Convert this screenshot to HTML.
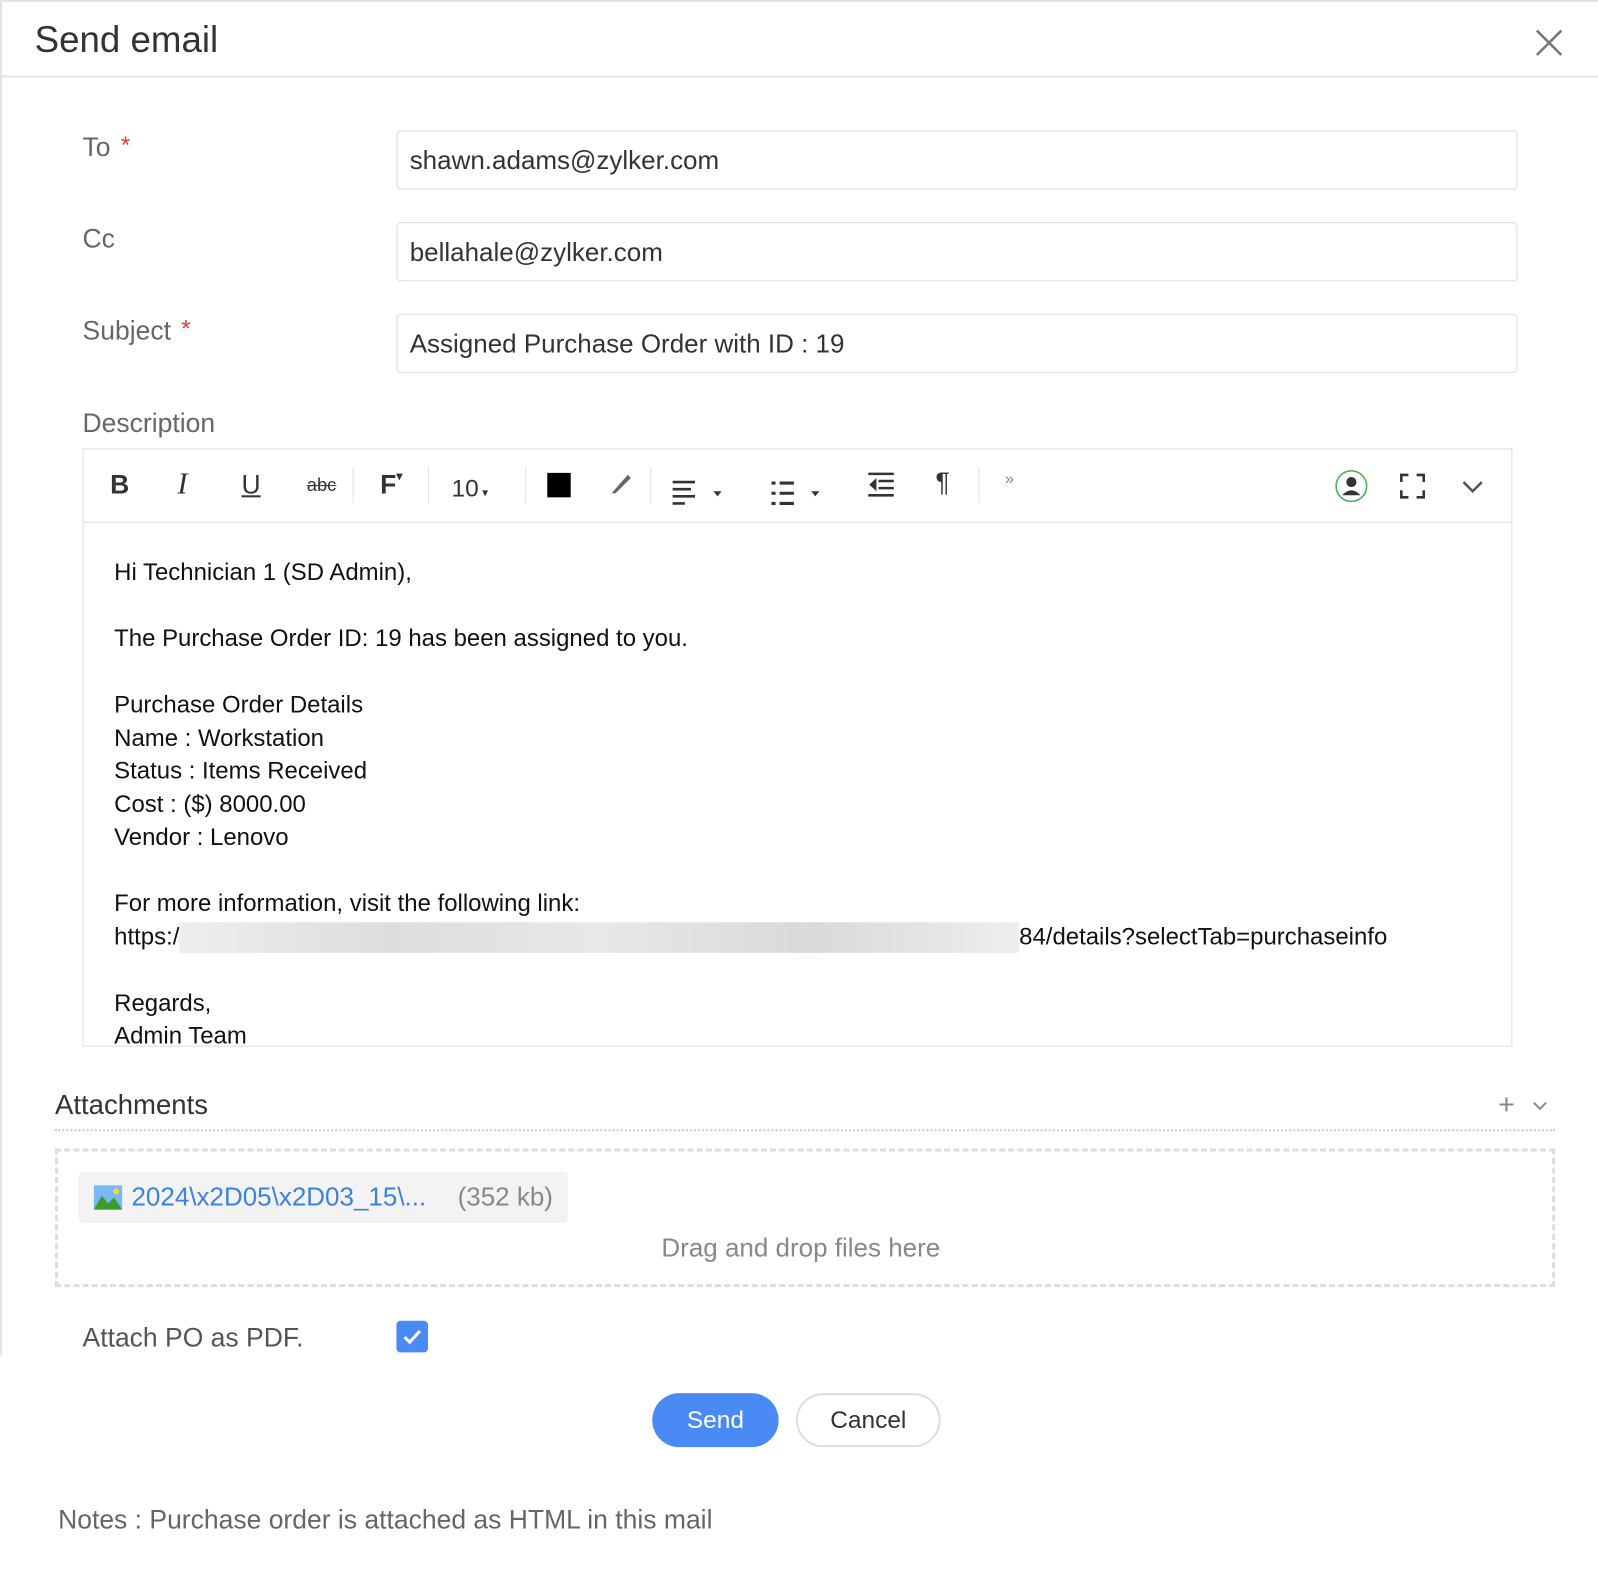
<!DOCTYPE html>
<html><head><meta charset="utf-8"><style>
html,body{margin:0;padding:0;background:#fff;overflow:hidden;width:1598px;height:1589px}
#w{position:absolute;left:0;top:0;width:1568px;height:1559px;transform:scale(1.01913);transform-origin:0 0;font-family:"Liberation Sans",sans-serif;color:#333}
.a{position:absolute}
.lbl{position:absolute;left:81px;font-size:26px;color:#666}
.req{color:#e53935;font-size:24px;vertical-align:top;margin-left:10px}
.inp{position:absolute;left:389px;width:1100px;height:56px;border:1px solid #ddd;border-radius:4px;font-size:25.5px;line-height:58px;padding-left:12px;box-sizing:border-box;color:#333}
.tb{position:absolute;top:460px;font-size:26px;color:#333}
.sep{position:absolute;top:458px;width:1px;height:36px;background:#e2e2e2}
.body{position:absolute;left:112px;top:545px;font-size:23.5px;line-height:32.5px;color:#111}
</style></head><body><div id="w">
<div class="a" style="left:0;top:0;width:1568px;height:2px;background:#e4e4e4"></div>
<div class="a" style="left:0;top:0;width:2px;height:1330px;background:#e4e4e4"></div>
<div class="a" style="left:0;top:74px;width:1568px;height:2px;background:#e4e4e4"></div>
<div class="a" style="left:34px;top:18px;font-size:36px;color:#333">Send email</div>
<svg class="a" style="left:1506px;top:28px" width="28" height="28"><path d="M2 2L26 26M26 2L2 26" stroke="#777" stroke-width="2.5"/></svg>

<div class="lbl" style="top:129px">To<span class="req">*</span></div>
<div class="lbl" style="top:219px">Cc</div>
<div class="lbl" style="top:309px">Subject<span class="req">*</span></div>
<div class="lbl" style="top:400px">Description</div>
<div class="inp" style="top:128px;height:58px">shawn.adams@zylker.com</div>
<div class="inp" style="top:218px;height:58px">bellahale@zylker.com</div>
<div class="inp" style="top:308px;height:58px">Assigned Purchase Order with ID : 19</div>

<div class="a" style="left:81px;top:440px;width:1403px;height:587px;border:1px solid #ddd;box-sizing:border-box"></div>
<div class="a" style="left:82px;top:512px;width:1401px;height:1px;background:#ddd"></div>
<div class="tb" style="left:108px;font-weight:bold">B</div>
<div class="tb" style="left:174px;font-style:italic;font-family:'Liberation Serif',serif;font-size:30px;top:458px">I</div>
<div class="tb" style="left:237px;text-decoration:underline">U</div>
<div class="tb" style="left:301px;font-size:18px;top:466px;text-decoration:line-through">abc</div>
<div class="sep" style="left:346px"></div>
<div class="tb" style="left:373px;font-weight:bold">F<span style="font-size:12px;vertical-align:top">▾</span></div>
<div class="sep" style="left:420px"></div>
<div class="tb" style="left:443px;top:466px;font-size:24px">10<span style="font-size:12px"> ▾</span></div>
<div class="sep" style="left:515px"></div>
<div class="a" style="left:537px;top:464px;width:23px;height:24px;background:#000"></div>
<svg class="a" style="left:596px;top:462px" width="26" height="26"><path d="M4 22L20 4L23 7L8 22Z" fill="#666"/></svg>
<div class="sep" style="left:638px"></div>
<svg class="a" style="left:658px;top:470px" width="56" height="28"><path d="M2 3H24M2 10H20M2 17H24M2 24H14" stroke="#333" stroke-width="2.5"/><path d="M42 12L50 12L46 17Z" fill="#333"/></svg>
<svg class="a" style="left:755px;top:470px" width="56" height="28"><path d="M2 4H6M10 4H24M2 14H6M10 14H24M2 24H6M10 24H24" stroke="#333" stroke-width="3"/><path d="M41 12L49 12L45 17Z" fill="#333"/></svg>
<svg class="a" style="left:850px;top:462px" width="30" height="28"><path d="M2 3H27M12 10H27M12 17H27M2 24H27" stroke="#333" stroke-width="2.5"/><path d="M10 7L3 13.5L10 20Z" fill="#333"/></svg>
<div class="tb" style="left:918px;top:458px;font-size:26px">¶</div>
<div class="sep" style="left:960px"></div>
<div class="tb" style="left:986px;top:462px;font-size:16px;color:#888">»</div>
<svg class="a" style="left:1309px;top:460px" width="34" height="34"><circle cx="17" cy="17" r="15" fill="none" stroke="#4caf50" stroke-width="1.5"/><circle cx="17" cy="13" r="5" fill="#333"/><path d="M8 26Q17 16 26 26Z" fill="#333"/></svg>
<svg class="a" style="left:1373px;top:464px" width="26" height="26"><path d="M2 9V2H9M17 2H24V9M24 17V24H17M9 24H2V17" fill="none" stroke="#333" stroke-width="2.5"/></svg>
<svg class="a" style="left:1434px;top:470px" width="22" height="16"><path d="M2 3L11 12L20 3" fill="none" stroke="#555" stroke-width="2.5"/></svg>

<div class="body">Hi Technician 1 (SD Admin),<br><br>The Purchase Order ID: 19 has been assigned to you.<br><br>Purchase Order Details<br>Name : Workstation<br>Status : Items Received<br>Cost : ($) 8000.00<br>Vendor : Lenovo<br><br>For more information, visit the following link:<br>https:/<span style="display:inline-block;width:824px;height:30px;vertical-align:middle;background:linear-gradient(90deg,#eee,#ddd,#e8e8e8,#d9d9d9,#eee)"></span>84/details?selectTab=purchaseinfo<br><br>Regards,<br>Admin Team</div>

<div class="a" style="left:54px;top:1069px;font-size:27px;color:#333">Attachments</div>
<div class="a" style="left:1470px;top:1068px;font-size:28px;color:#888">+</div>
<svg class="a" style="left:1503px;top:1080px" width="16" height="12"><path d="M2 2L8 8L14 2" fill="none" stroke="#888" stroke-width="2"/></svg>
<div class="a" style="left:54px;top:1108px;width:1472px;border-top:2px dotted #ccc"></div>
<div class="a" style="left:54px;top:1127px;width:1472px;height:136px;border:3px dashed #ddd;box-sizing:border-box"></div>
<div class="a" style="left:77px;top:1150px;width:480px;height:50px;background:#f3f3f3;border-radius:4px"></div>
<svg class="a" style="left:92px;top:1163px" width="28" height="24"><rect width="28" height="24" fill="#7ab8f5"/><path d="M0 24L8 10L14 18L20 12L28 24Z" fill="#3c9a2f"/><circle cx="22" cy="6" r="3" fill="#f5d742"/></svg>
<div class="a" style="left:129px;top:1161px;font-size:25.5px;color:#3b82e0">2024\x2D05\x2D03_15\...</div>
<div class="a" style="left:449px;top:1161px;font-size:25.5px;color:#888">(352 kb)</div>
<div class="a" style="left:649px;top:1211px;font-size:25.5px;color:#888">Drag and drop files here</div>

<div class="a" style="left:81px;top:1297px;font-size:26px;color:#555">Attach PO as PDF.</div>
<div class="a" style="left:389px;top:1296px;width:31px;height:31px;background:#4a8af4;border-radius:4px"></div>
<svg class="a" style="left:389px;top:1296px" width="31" height="31"><path d="M8 16L13 21L23 10" fill="none" stroke="#fff" stroke-width="3"/></svg>

<div class="a" style="left:640px;top:1367px;width:124px;height:53px;background:#4a8af4;border-radius:27px;color:#fff;font-size:24px;text-align:center;line-height:53px">Send</div>
<div class="a" style="left:781px;top:1367px;width:142px;height:53px;border:2px solid #ddd;box-sizing:border-box;border-radius:27px;color:#333;font-size:24px;text-align:center;line-height:49px">Cancel</div>
<div class="a" style="left:57px;top:1476px;font-size:26px;color:#666">Notes : Purchase order is attached as HTML in this mail</div>
</div></body></html>
